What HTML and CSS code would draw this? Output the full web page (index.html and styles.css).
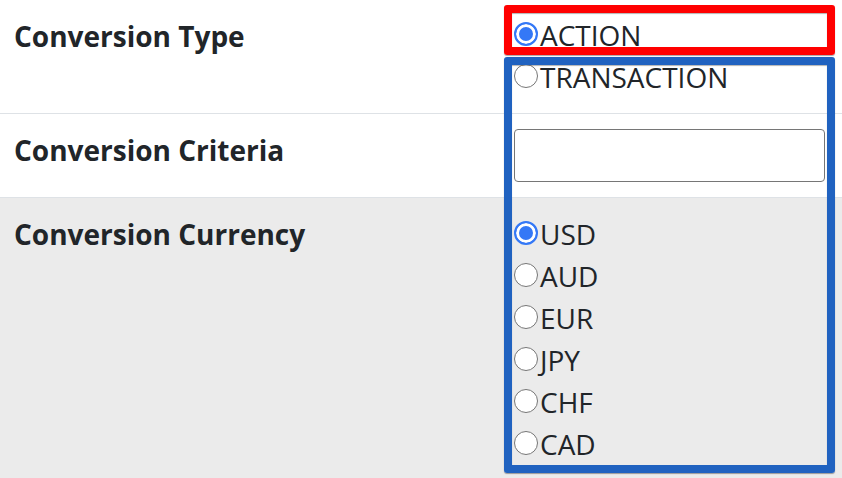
FILE: index.html
```html
<!DOCTYPE html>
<html lang="en">
<head>
<meta charset="utf-8">
<title>Conversion settings</title>
<link rel="stylesheet" href="styles.css">
</head>
<body>
<div class="page">
  <table class="conv">
    <tr class="row">
      <th class="label">Conversion Type</th>
      <td class="field">
        <label class="opt"><input class="radio" type="radio" name="type" checked>ACTION</label>
        <label class="opt"><input class="radio" type="radio" name="type">TRANSACTION</label>
      </td>
    </tr>
    <tr class="row">
      <th class="label">Conversion Criteria</th>
      <td class="field"><input class="text-input" type="text"></td>
    </tr>
    <tr class="row row-shaded">
      <th class="label">Conversion Currency</th>
      <td class="field">
        <label class="opt"><input class="radio" type="radio" name="cur" checked>USD</label>
        <label class="opt"><input class="radio" type="radio" name="cur">AUD</label>
        <label class="opt"><input class="radio" type="radio" name="cur">EUR</label>
        <label class="opt"><input class="radio" type="radio" name="cur">JPY</label>
        <label class="opt"><input class="radio" type="radio" name="cur">CHF</label>
        <label class="opt"><input class="radio" type="radio" name="cur">CAD</label>
      </td>
    </tr>
  </table>
  <div class="mark mark-red"></div>
  <div class="mark mark-blue"></div>
</div>
</body>
</html>
```

FILE: styles.css
```css
html, body {
  margin: 0;
  padding: 0;
  background: #fff;
}
body {
  font-family: "Open Sans", "Liberation Sans", sans-serif;
  font-size: 28px;
  line-height: 42px;
  color: #212529;
  overflow: hidden;
}
.page {
  position: relative;
  width: 842px;
  height: 478px;
  overflow: hidden;
}
.conv {
  width: 842px;
  border-collapse: collapse;
  border-spacing: 0;
}
.row {
  border-bottom: 1.5px solid #dee2e6;
}
.row-shaded {
  background: #ebebeb;
  border-bottom: none;
}
.label {
  width: 472px;
  padding: 15px 14px 14px;
  text-align: left;
  vertical-align: top;
  font-weight: 700;
}
.field {
  padding: 14px 14px 15px;
  vertical-align: top;
}
.opt {
  display: block;
  height: 42px;
  white-space: nowrap;
}
.row-shaded .field {
  padding-top: 15px;
}
.radio {
  -webkit-appearance: none;
  appearance: none;
  box-sizing: border-box;
  width: 24px;
  height: 24px;
  margin: 0 2px 0 0;
  border: 1.8px solid #767676;
  border-radius: 50%;
  background: #fff;
  vertical-align: baseline;
  display: inline-block;
}
.radio:checked {
  border: 2.5px solid #3478f6;
  background: #3478f6;
  box-shadow: inset 0 0 0 3px #fff;
}
.text-input {
  display: block;
  box-sizing: border-box;
  width: 311px;
  height: 53px;
  margin: 1px 0 0;
  border: 1.5px solid #767676;
  border-radius: 4px;
  background: #fff;
  font: inherit;
}
.mark {
  position: absolute;
  left: 504px;
  width: 331px;
  box-sizing: border-box;
  border-width: 8px;
  border-style: solid;
  border-radius: 3px;
  box-shadow: 0 1px 1px rgba(0, 0, 0, 0.35), inset 0 1px 1px rgba(0, 0, 0, 0.3);
}
.mark-red {
  top: 5px;
  height: 50px;
  border-color: #ff0000;
}
.mark-blue {
  top: 57px;
  height: 416px;
  border-color: #2062c0;
}
```
